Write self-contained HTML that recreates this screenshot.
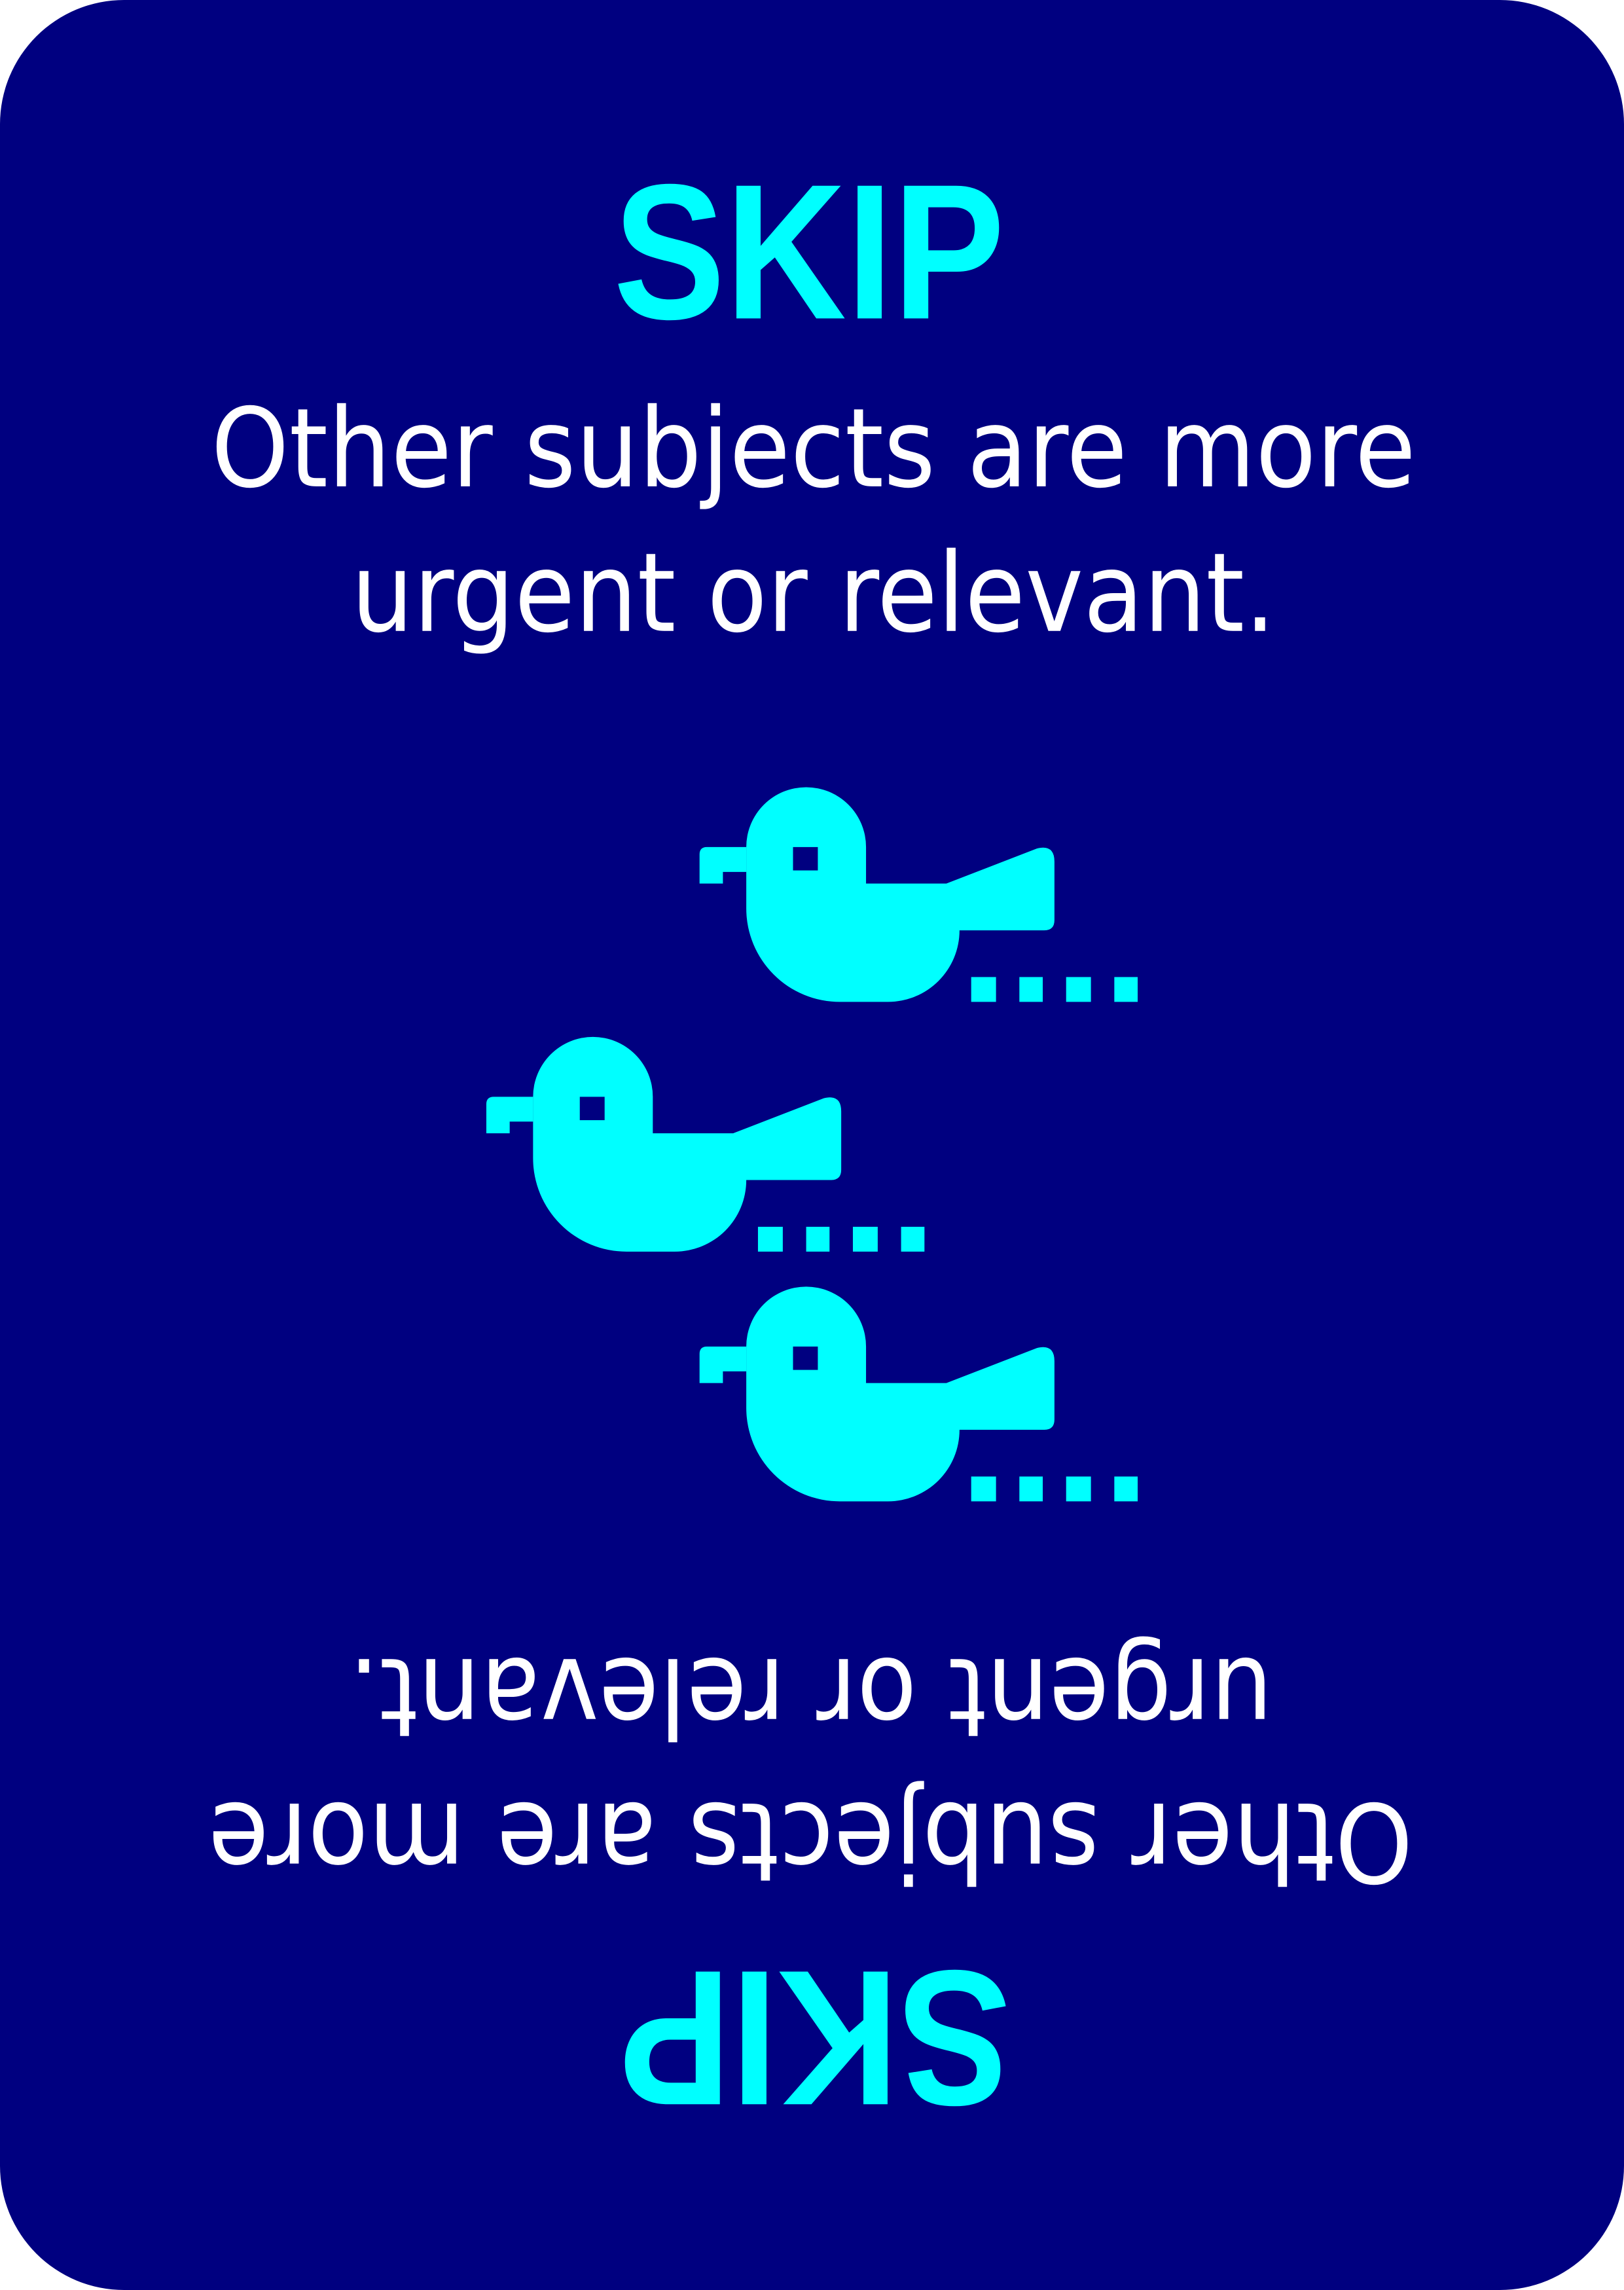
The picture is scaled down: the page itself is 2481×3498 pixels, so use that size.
<!DOCTYPE html>
<html><head><meta charset="utf-8"><style>
html,body{margin:0;padding:0;background:#fff;}
svg{display:block;}
</style></head><body>
<svg width="2481" height="3498" viewBox="0 0 1112 1568" xmlns="http://www.w3.org/2000/svg" preserveAspectRatio="none">
<defs>
<g id="duck">
<path d="M511,580 A41,41 0 0 1 593,580 L593,605 L648,605 L710,581 Q722,578 722,590 L722,630 Q722,637 715,637 L657,637 A49,49 0 0 1 608,686 L575,686 A64,64 0 0 1 511,622 Z" fill="#00FFFF"/>
<rect x="543" y="580" width="17" height="16" fill="#000080"/>
<path d="M479,605 L479,585 Q479,580 484,580 L511,580 L511,597 L495,597 L495,605 Z" fill="#00FFFF"/>
<rect x="665" y="669" width="17" height="17" fill="#00FFFF"/>
<rect x="698" y="669" width="16" height="17" fill="#00FFFF"/>
<rect x="730" y="669" width="17" height="17" fill="#00FFFF"/>
<rect x="763" y="669" width="16" height="17" fill="#00FFFF"/>
</g>
<g id="txt">
<text x="554" y="218" text-anchor="middle" font-family="Liberation Sans, sans-serif" font-weight="bold" font-size="132" fill="#00FFFF" textLength="268" lengthAdjust="spacingAndGlyphs">SKIP</text>
<text x="557" y="333" text-anchor="middle" font-family="DejaVu Sans, sans-serif" font-size="75" fill="#fff" textLength="825" lengthAdjust="spacingAndGlyphs">Other subjects are more</text>
<text x="557" y="432" text-anchor="middle" font-family="DejaVu Sans, sans-serif" font-size="75" fill="#fff" textLength="633" lengthAdjust="spacingAndGlyphs">urgent or relevant.</text>
</g>
</defs>
<rect x="0" y="0" width="1112" height="1568" rx="85" ry="85" fill="#000080"/>
<use href="#txt"/>
<g transform="rotate(180 556 784)"><use href="#txt"/></g>
<use href="#duck"/>
<use href="#duck" transform="translate(-146 171)"/>
<use href="#duck" transform="translate(0 342)"/>
</svg>
</body></html>
